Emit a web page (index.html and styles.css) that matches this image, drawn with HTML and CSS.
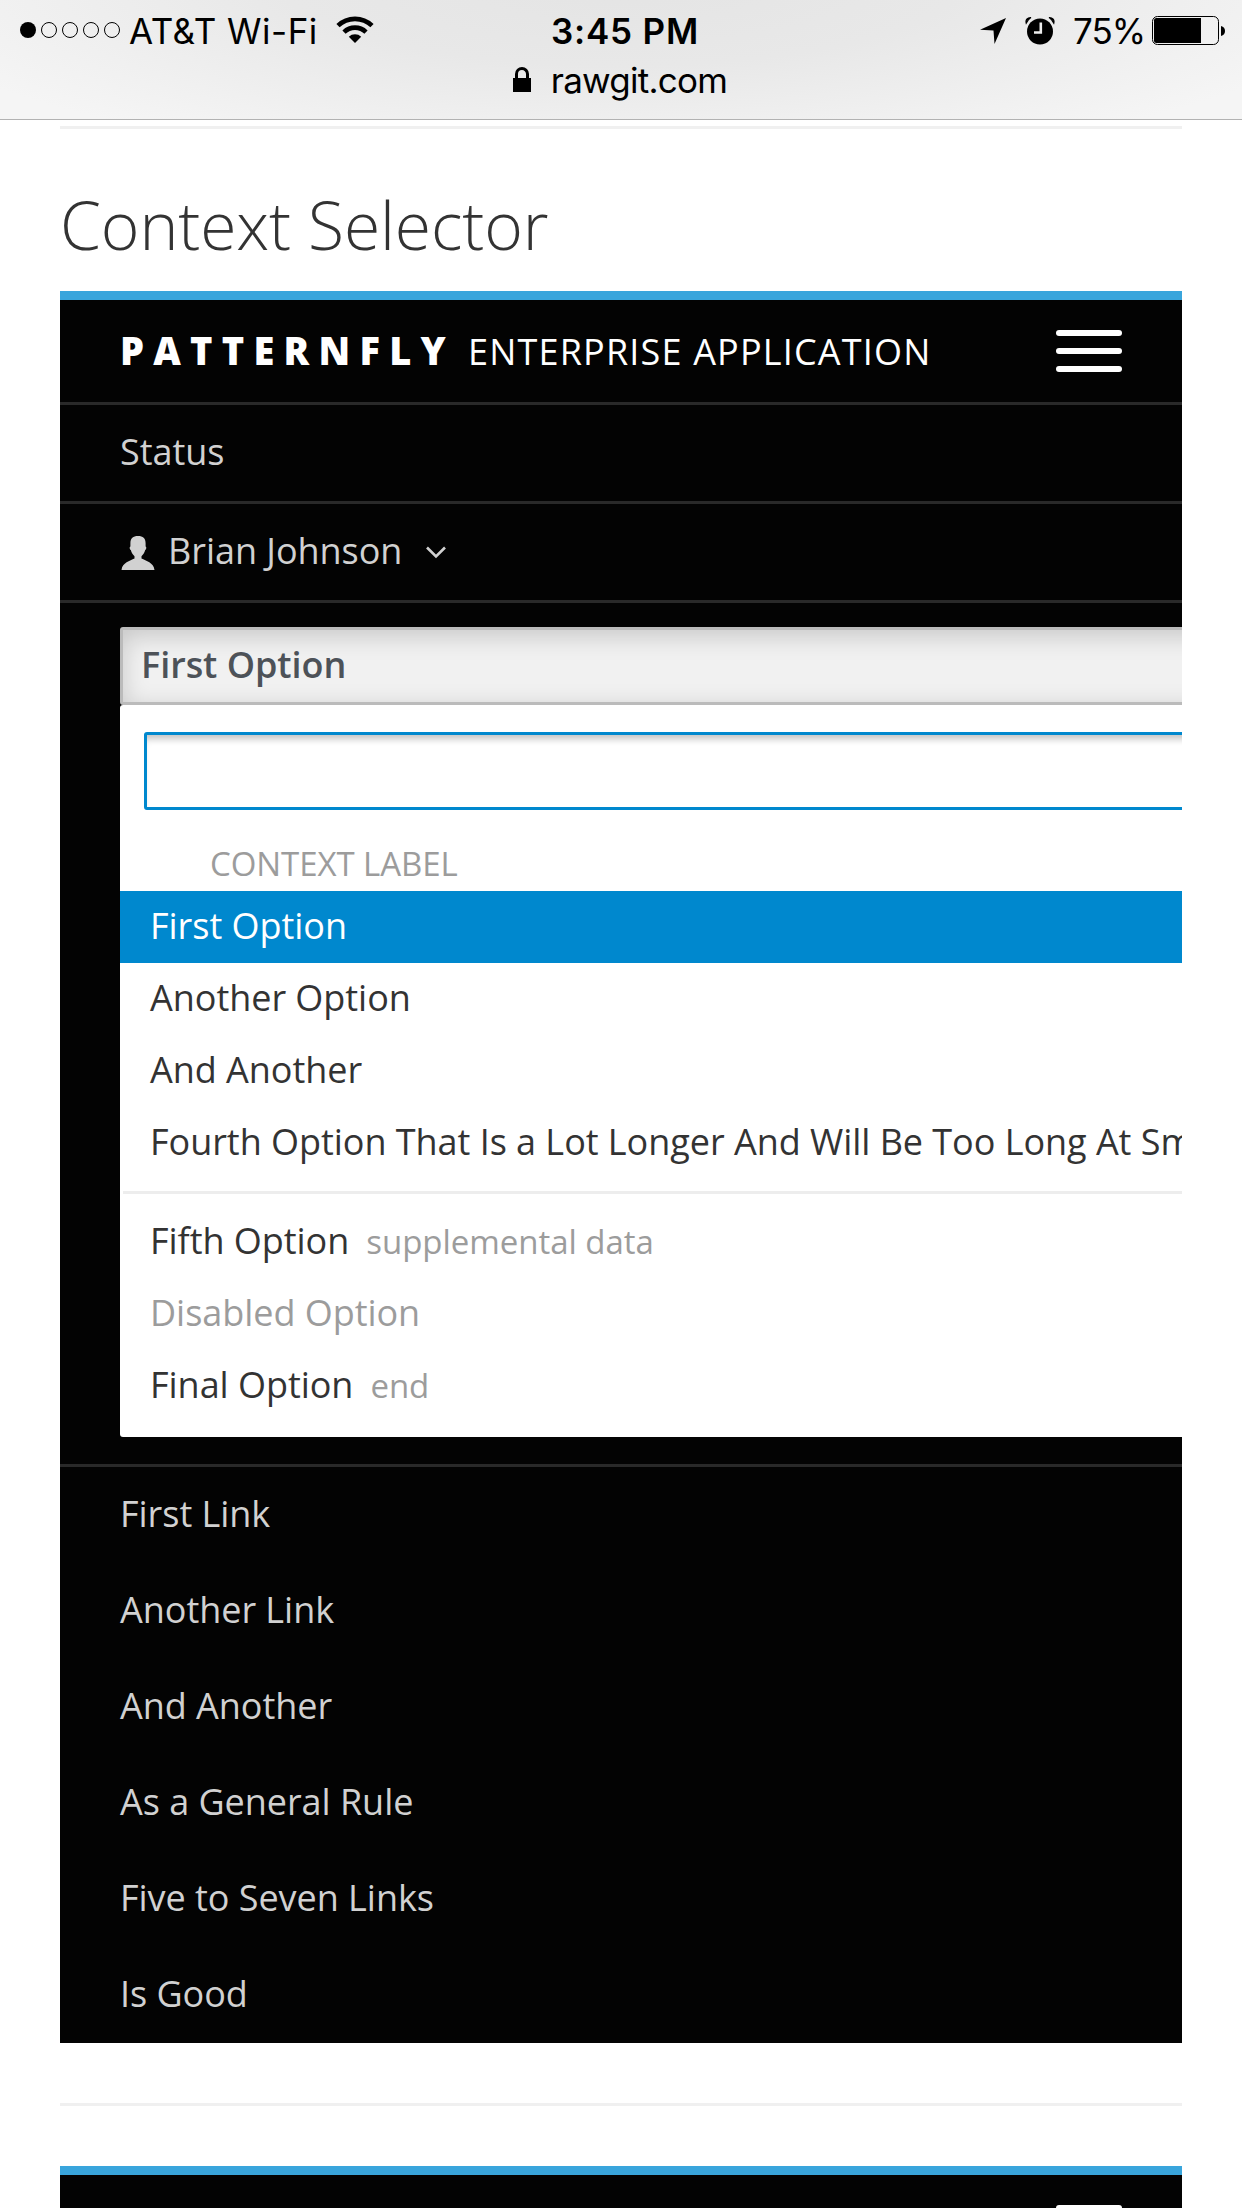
FILE: index.html
```html
<!DOCTYPE html>
<html lang="en">
<head>
<meta charset="utf-8">
<title>Context Selector</title>
<link rel="stylesheet" href="styles.css">
</head>
<body>
<header class="chrome">
  <div class="status">
    <div class="status-left">
      <svg class="signal" width="100" height="16" viewBox="0 0 100 16"><circle cx="8" cy="8" r="8"/><g fill="none" stroke="#000" stroke-width="1"><circle cx="29" cy="8" r="7.5"/><circle cx="50" cy="8" r="7.5"/><circle cx="71" cy="8" r="7.5"/><circle cx="92" cy="8" r="7.5"/></g></svg>
      <span class="carrier">AT&amp;T Wi-Fi</span>
      <svg class="wifi" width="38" height="28" viewBox="0 0 38 28"><g fill="none" stroke="#000" stroke-width="4.6"><path d="M2 9.7a24.5 24.5 0 0 1 34 0"/><path d="M8 16.1a15.8 15.8 0 0 1 22 0"/></g><path d="M19 27l-6.2-6.2a9 9 0 0 1 12.4 0z"/></svg>
    </div>
    <span class="time">3:45 PM</span>
    <div class="status-right">
      <svg class="arrow" width="28" height="28" viewBox="0 0 28 28"><path d="M27 1L15.500 27L14.500 13.500L1 12.800z"/></svg>
      <svg class="alarm" width="30" height="28" viewBox="0 0 30 28"><circle cx="15" cy="14.5" r="13"/><path d="M1.2 6.2Q0 1 6 .6Q3.500 2 1.200 6.200zM28.800 6.200Q30 1 24 .6Q26.500 2 28.800 6.200z" stroke="#000" stroke-width="1.200"/><path d="M15.800 5.500v10H9" fill="none" stroke="#ededed" stroke-width="2.600"/></svg>
      <span class="percent">75%</span>
      <svg class="battery" width="74" height="30" viewBox="0 0 74 30"><rect x=".5" y=".5" width="66" height="28" rx="5" fill="none" stroke="#000"/><path d="M4.500 2H49v25H4.500A2.500 2.500 0 0 1 2 24.500v-20A2.500 2.500 0 0 1 4.500 2z"/><path d="M69 10q4 1 4 5t-4 5z"/></svg>
    </div>
  </div>
  <div class="address">
    <svg width="18" height="26" viewBox="0 0 18 26"><rect y="11" width="18" height="14"/><path d="M3.500 12V7a5.500 5.500 0 0 1 11 0v5" fill="none" stroke="#000" stroke-width="3"/></svg>
    <span class="host">rawgit.com</span>
  </div>
</header>
<main class="page">
  <hr class="rule first">
  <h2 class="title">Context Selector</h2>
  <nav class="navbar">
    <div class="brand-row">
      <div class="brand"><span class="brand-name">PATTERNFLY</span><span class="brand-app">ENTERPRISE APPLICATION</span></div>
      <div class="toggle"><i></i><i></i><i></i></div>
    </div>
    <div class="util">Status</div>
    <div class="util">
      <svg class="user" width="34" height="34" viewBox="0 0 34 34"><path d="M17 0c5 0 7.600 2.200 7.600 7.200V10.500c1 0 .900 3-.400 3.400-.7 3-2.300 4.600-3.700 6.300v2.400C25 25 32.600 26.500 33.500 34H.5C1.400 26.500 9 25 13.500 22.600v-2.400c-1.400-1.700-3-3.300-3.700-6.300-1.300-.4-1.400-3.400-.4-3.400V7.200C9.400 2.200 12 0 17 0z"/></svg>
      <span class="user-name">Brian Johnson</span>
      <svg class="caret" width="20" height="13" viewBox="0 0 20 13"><path d="M1 1.500l9 9 9-9" fill="none" stroke="#d1d1d1" stroke-width="2.600"/></svg>
    </div>
    <div class="selector">
      <div class="select-btn">First Option</div>
      <div class="menu">
        <div class="search"></div>
        <div class="group-label">CONTEXT LABEL</div>
        <div class="option selected">First Option</div>
        <div class="option">Another Option</div>
        <div class="option">And Another</div>
        <div class="option long">Fourth Option That Is a Lot Longer And Will Be Too Long At Small</div>
        <hr class="divider">
        <div class="option">Fifth Option<small>supplemental data</small></div>
        <div class="option disabled">Disabled Option</div>
        <div class="option">Final Option<small>end</small></div>
      </div>
    </div>
    <div class="links">
      <div class="link">First Link</div>
      <div class="link">Another Link</div>
      <div class="link">And Another</div>
      <div class="link">As a General Rule</div>
      <div class="link">Five to Seven Links</div>
      <div class="link">Is Good</div>
    </div>
  </nav>
  <hr class="rule">
  <nav class="navbar">
    <div class="brand-row"><div class="brand"></div><div class="toggle"><i></i><i></i><i></i></div></div>
  </nav>
</main>
</body>
</html>
```
FILE: styles.css
```css
* { box-sizing: border-box; }
body {
  margin: 0;
  width: 1242px;
  height: 2208px;
  overflow: hidden;
  background: #fff;
  color: #333;
  font: 36px "Open Sans", sans-serif;
}
svg { display: block; flex: none; }

/* Browser chrome */
.chrome {
  height: 120px;
  border-bottom: 1px solid #b2b2b2;
  background: radial-gradient(ellipse 760px 190px at 50% -20px, #e4e4e4 0%, #e8e8e8 45%, #f5f5f5 100%);
  color: #000;
  font-family: Inter, sans-serif;
}
.status {
  display: grid;
  grid-template-columns: 1fr auto 1fr;
  height: 60px;
  padding: 0 16px 0 20px;
  line-height: 62px;
  white-space: nowrap;
}
.status-left, .status-right { display: flex; align-items: flex-start; }
.status-right { justify-content: flex-end; }
.signal { margin-top: 22px; }
.carrier { flex: none; width: 216px; padding-left: 9px; font-size: 35px; letter-spacing: 0.5px; }
.wifi { margin-top: 16px; }
.time { padding-left: 4px; font-weight: 600; font-size: 35px; letter-spacing: 0.8px; }
.arrow { margin: 17px 18px 0 0; }
.alarm { margin-top: 17px; }
.percent { width: 90px; margin-left: 18px; font-size: 35px; letter-spacing: -1px; }
.battery { margin: 16px 0 0 -11px; }
.address {
  display: flex;
  justify-content: center;
  gap: 20px;
  height: 59px;
  line-height: 40px;
}
.address svg { margin: 7px 0 0 -2px; }
.host { font-size: 35px; letter-spacing: -0.75px; }

/* Page */
.page { padding: 6px 60px 0; }
.rule { height: 3px; margin: 60px 0; border: 0; background: #f0f0f0; }
.rule.first { margin: 0; }
.title {
  height: 162px;
  margin: 0;
  padding-top: 50px;
  font-size: 66px;
  font-weight: 300;
  letter-spacing: -0.12px;
  line-height: 90px;
}
.navbar { overflow: hidden; border-top: 9px solid #39a5dc; background: #030303; color: #d1d1d1; letter-spacing: -0.04px; }
.brand-row {
  display: flex;
  justify-content: space-between;
  height: 105px;
  padding: 30px 60px 0;
  border-bottom: 3px solid #292929;
}
.brand { display: flex; align-items: baseline; margin-top: -4px; color: #fff; line-height: 48px; white-space: nowrap; }
.brand-name { width: 348px; font-size: 38px; font-weight: 800; letter-spacing: 9.25px; }
.brand-app { font-size: 36px; letter-spacing: 1.18px; }
.toggle { display: flex; flex-direction: column; gap: 12px; width: 66px; }
.toggle i { height: 6px; border-radius: 3px; background: #fff; }
.util {
  display: flex;
  height: 99px;
  padding-left: 60px;
  border-bottom: 3px solid #292929;
  line-height: 94px;
  white-space: nowrap;
}
.user { margin: 32px 13px 0 1px; fill: #d1d1d1; }
.user-name { width: 258px; }
.caret { margin-top: 42px; }

/* Context selector */
.selector { width: 1500px; padding: 24px 0 27px 60px; white-space: nowrap; }
.select-btn {
  height: 78px;
  padding-left: 18px;
  border: 3px solid #bbb;
  border-radius: 3px;
  background: #f1f1f1;
  box-shadow: inset 0 6px 24px rgba(0, 0, 0, 0.175);
  color: #4d5258;
  font-weight: 600;
  line-height: 70px;
}
.menu { height: 732px; padding-top: 27px; border-radius: 3px; background: #fff; color: #333; }
.search {
  height: 78px;
  margin: 0 24px;
  border: 3px solid #0088ce;
  border-radius: 3px;
  box-shadow: inset 0 8px 7px -4px rgba(3, 3, 3, 0.24);
}
.group-label { height: 81px; padding-left: 90px; color: #9c9c9c; font-size: 33px; letter-spacing: -0.08px; line-height: 108px; }
.option { height: 72px; padding-left: 30px; line-height: 70px; }
.option.selected { background: #0088ce; color: #fff; }
.option.disabled, .option small { color: #9c9c9c; }
.option small { margin-left: 17px; font-size: 33px; }
.divider { height: 3px; margin: 12px 0 12px 3px; border: 0; background: #ededed; }

.links { border-top: 3px solid #292929; }
.link { height: 96px; padding-left: 60px; line-height: 94px; }
```
